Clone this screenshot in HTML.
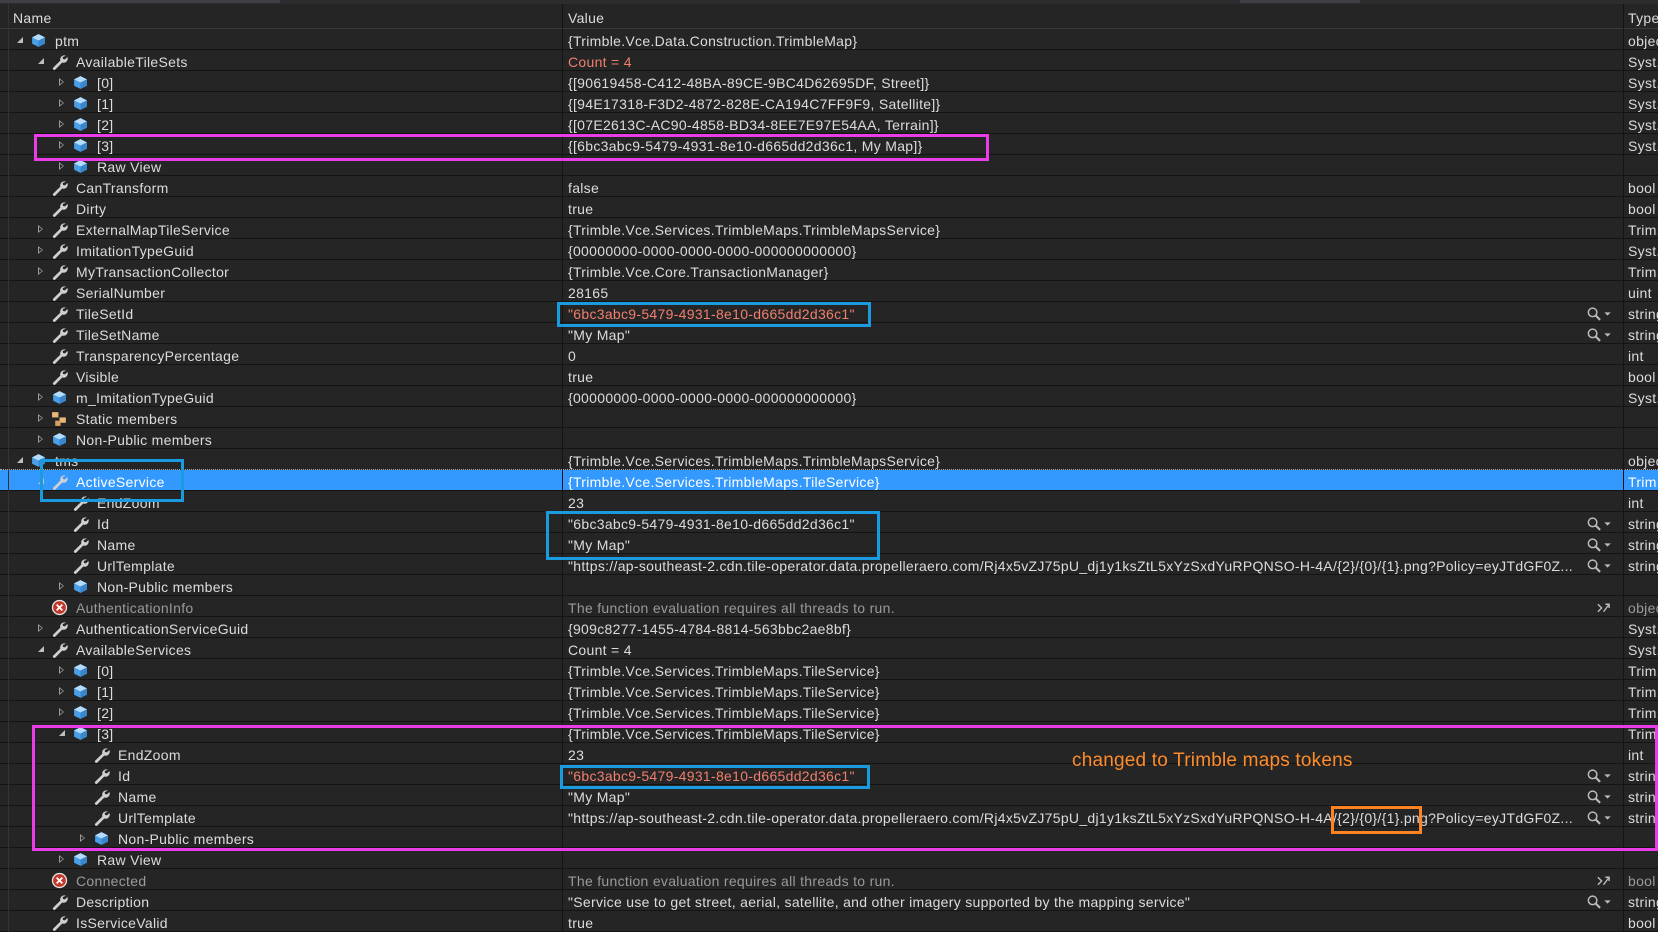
<!DOCTYPE html>
<html><head><meta charset="utf-8"><style>
*{margin:0;padding:0;box-sizing:border-box}
body{width:1658px;height:932px;background:#252526;overflow:hidden;position:relative;font-family:"Liberation Sans",sans-serif;font-size:14px;color:#dcdcdc;letter-spacing:0.3px}
.top{position:absolute;left:0;top:0;width:1658px;height:4px;background:#2d2d30}
.top i{position:absolute;top:0;height:3px;background:#3f3f46}
.hdr{position:absolute;left:0;top:4px;width:1658px;height:25px;border-bottom:1px solid #3a3a3a}
.hdr span{position:absolute;top:6px}
.r{position:absolute;left:0;width:1658px;height:21px;border-bottom:1px solid #141414;white-space:nowrap}
.r>*{position:absolute}
.n{top:4px}
.v{left:568px;top:4px;width:1020px;overflow:hidden}
.y{left:1628px;top:4px;width:30px;overflow:hidden}
.t{top:7px;width:0;height:0}
.c{border-left:5px solid #9a9a9a;border-top:4px solid transparent;border-bottom:4px solid transparent}
.c::after{content:"";position:absolute;left:-4px;top:-2px;border-left:3px solid #252526;border-top:2px solid transparent;border-bottom:2px solid transparent}
.e{border-right:6px solid #bfbfbf;border-top:6px solid transparent;top:8px}
.ic{top:3px;width:17px;height:17px}
.L0 .t{left:17px}.L0 .ic{left:30px}.L0 .n{left:55px}
.L1 .t{left:38px}.L1 .ic{left:51px}.L1 .n{left:76px}
.L2 .t{left:59px}.L2 .ic{left:72px}.L2 .n{left:97px}
.L3 .t{left:80px}.L3 .ic{left:93px}.L3 .n{left:118px}
.red{color:#f07f6e}
.g{color:#9a9a9a}
.sel{background:#3399ff;color:#fff}
.sel .v,.sel .y{color:#fff}
.mg{left:1586px;top:4px;width:26px;height:16px}
.vl{position:absolute;top:4px;width:1px;height:928px;background:#141414}
.box{position:absolute;border:3px solid}
</style></head><body>
<svg width="0" height="0" style="position:absolute">
<defs>
<symbol id="cube" viewBox="0 0 16 16"><polygon points="8,2 14,5 14,11 8,14 2,11 2,5" fill="#4a9fe6"/><polygon points="8,2 14,5 8,8 2,5" fill="#b5dcfa"/><polygon points="8,8 14,5 14,11 8,14" fill="#3a86cc"/></symbol>
<symbol id="wr" viewBox="0 0 16 16"><path d="M14 2.6a3.8 3.8 0 0 0-5.2 4.6L2.2 13.6a1.3 1.3 0 0 0 1.9 1.9l6.5-6.6a3.8 3.8 0 0 0 4.8-5.1l-2.2 2.2-1.9-.3-.3-1.9z" fill="#d0d0d0"/></symbol>
<symbol id="err" viewBox="0 0 16 16"><circle cx="8" cy="8" r="7.2" fill="#e8e8e8"/><circle cx="8" cy="8" r="6" fill="#c1392b"/><path d="M5.3 5.3l5.4 5.4M10.7 5.3l-5.4 5.4" stroke="#fff" stroke-width="1.6"/></symbol>
<symbol id="st" viewBox="0 0 16 16"><rect x="1" y="2" width="6" height="5" fill="#e8b878"/><rect x="8" y="7" width="6" height="5" fill="#e8b878"/><rect x="4" y="10" width="5" height="5" fill="#d9a060"/></symbol>
<symbol id="mag" viewBox="0 0 24 15"><circle cx="6" cy="6" r="4" fill="none" stroke="#bbb" stroke-width="1.4"/><path d="M9 9l4 4" stroke="#bbb" stroke-width="2"/><path d="M17 6h6l-3 3z" fill="#bbb"/></symbol>
<symbol id="nr" viewBox="0 0 16 16"><path d="M2 4l4 4-4 4M8 12l6-8M10 4h4v4" stroke="#bbb" stroke-width="1.5" fill="none"/></symbol>
</defs></svg>
<div class="top"><i style="left:0;width:280px"></i><i style="left:1240px;width:120px"></i></div>
<div class="hdr"><span style="left:13px">Name</span><span style="left:568px">Value</span><span style="left:1628px">Type</span></div>

<div class="r L0" style="top:29px"><i class="t e"></i><svg class="ic"><use href="#cube"/></svg><span class="n">ptm</span><span class="v">{Trimble.Vce.Data.Construction.TrimbleMap}</span><span class="y">object</span></div>
<div class="r L1" style="top:50px"><i class="t e"></i><svg class="ic"><use href="#wr"/></svg><span class="n">AvailableTileSets</span><span class="v red">Count = 4</span><span class="y">Syst...</span></div>
<div class="r L2" style="top:71px"><i class="t c"></i><svg class="ic"><use href="#cube"/></svg><span class="n">[0]</span><span class="v">{[90619458-C412-48BA-89CE-9BC4D62695DF, Street]}</span><span class="y">Syst...</span></div>
<div class="r L2" style="top:92px"><i class="t c"></i><svg class="ic"><use href="#cube"/></svg><span class="n">[1]</span><span class="v">{[94E17318-F3D2-4872-828E-CA194C7FF9F9, Satellite]}</span><span class="y">Syst...</span></div>
<div class="r L2" style="top:113px"><i class="t c"></i><svg class="ic"><use href="#cube"/></svg><span class="n">[2]</span><span class="v">{[07E2613C-AC90-4858-BD34-8EE7E97E54AA, Terrain]}</span><span class="y">Syst...</span></div>
<div class="r L2" style="top:134px"><i class="t c"></i><svg class="ic"><use href="#cube"/></svg><span class="n">[3]</span><span class="v">{[6bc3abc9-5479-4931-8e10-d665dd2d36c1, My Map]}</span><span class="y">Syst...</span></div>
<div class="r L2" style="top:155px"><i class="t c"></i><svg class="ic"><use href="#cube"/></svg><span class="n">Raw View</span></div>
<div class="r L1" style="top:176px"><svg class="ic"><use href="#wr"/></svg><span class="n">CanTransform</span><span class="v">false</span><span class="y">bool</span></div>
<div class="r L1" style="top:197px"><svg class="ic"><use href="#wr"/></svg><span class="n">Dirty</span><span class="v">true</span><span class="y">bool</span></div>
<div class="r L1" style="top:218px"><i class="t c"></i><svg class="ic"><use href="#wr"/></svg><span class="n">ExternalMapTileService</span><span class="v">{Trimble.Vce.Services.TrimbleMaps.TrimbleMapsService}</span><span class="y">Trim...</span></div>
<div class="r L1" style="top:239px"><i class="t c"></i><svg class="ic"><use href="#wr"/></svg><span class="n">ImitationTypeGuid</span><span class="v">{00000000-0000-0000-0000-000000000000}</span><span class="y">Syst...</span></div>
<div class="r L1" style="top:260px"><i class="t c"></i><svg class="ic"><use href="#wr"/></svg><span class="n">MyTransactionCollector</span><span class="v">{Trimble.Vce.Core.TransactionManager}</span><span class="y">Trim...</span></div>
<div class="r L1" style="top:281px"><svg class="ic"><use href="#wr"/></svg><span class="n">SerialNumber</span><span class="v">28165</span><span class="y">uint</span></div>
<div class="r L1" style="top:302px"><svg class="ic"><use href="#wr"/></svg><span class="n">TileSetId</span><span class="v red">"6bc3abc9-5479-4931-8e10-d665dd2d36c1"</span><svg class="mg"><use href="#mag"/></svg><span class="y">string</span></div>
<div class="r L1" style="top:323px"><svg class="ic"><use href="#wr"/></svg><span class="n">TileSetName</span><span class="v">"My Map"</span><svg class="mg"><use href="#mag"/></svg><span class="y">string</span></div>
<div class="r L1" style="top:344px"><svg class="ic"><use href="#wr"/></svg><span class="n">TransparencyPercentage</span><span class="v">0</span><span class="y">int</span></div>
<div class="r L1" style="top:365px"><svg class="ic"><use href="#wr"/></svg><span class="n">Visible</span><span class="v">true</span><span class="y">bool</span></div>
<div class="r L1" style="top:386px"><i class="t c"></i><svg class="ic"><use href="#cube"/></svg><span class="n">m_ImitationTypeGuid</span><span class="v">{00000000-0000-0000-0000-000000000000}</span><span class="y">Syst...</span></div>
<div class="r L1" style="top:407px"><i class="t c"></i><svg class="ic"><use href="#st"/></svg><span class="n">Static members</span></div>
<div class="r L1" style="top:428px"><i class="t c"></i><svg class="ic"><use href="#cube"/></svg><span class="n">Non-Public members</span></div>
<div class="r L0" style="top:449px;border-bottom:1px dotted #aaa"><i class="t e"></i><svg class="ic"><use href="#cube"/></svg><span class="n">tms</span><span class="v">{Trimble.Vce.Services.TrimbleMaps.TrimbleMapsService}</span><span class="y">object</span></div>
<div class="r L1 sel" style="top:470px"><i class="t e"></i><svg class="ic"><use href="#wr"/></svg><span class="n">ActiveService</span><span class="v">{Trimble.Vce.Services.TrimbleMaps.TileService}</span><span class="y">Trim...</span></div>
<div class="r L2" style="top:491px"><svg class="ic"><use href="#wr"/></svg><span class="n">EndZoom</span><span class="v">23</span><span class="y">int</span></div>
<div class="r L2" style="top:512px"><svg class="ic"><use href="#wr"/></svg><span class="n">Id</span><span class="v">"6bc3abc9-5479-4931-8e10-d665dd2d36c1"</span><svg class="mg"><use href="#mag"/></svg><span class="y">string</span></div>
<div class="r L2" style="top:533px"><svg class="ic"><use href="#wr"/></svg><span class="n">Name</span><span class="v">"My Map"</span><svg class="mg"><use href="#mag"/></svg><span class="y">string</span></div>
<div class="r L2" style="top:554px"><svg class="ic"><use href="#wr"/></svg><span class="n">UrlTemplate</span><span class="v" style="width:1010px">"https://ap-southeast-2.cdn.tile-operator.data.propelleraero.com/Rj4x5vZJ75pU_dj1y1ksZtL5xYzSxdYuRPQNSO-H-4A/{2}/{0}/{1}.png?Policy=eyJTdGF0Z...</span><svg class="mg"><use href="#mag"/></svg><span class="y">string</span></div>
<div class="r L2" style="top:575px"><i class="t c"></i><svg class="ic"><use href="#cube"/></svg><span class="n">Non-Public members</span></div>
<div class="r L1 g" style="top:596px"><svg class="ic"><use href="#err"/></svg><span class="n">AuthenticationInfo</span><span class="v">The function evaluation requires all threads to run.</span><svg class="mg" style="left:1596px;width:15px"><use href="#nr"/></svg><span class="y">object</span></div>
<div class="r L1" style="top:617px"><i class="t c"></i><svg class="ic"><use href="#wr"/></svg><span class="n">AuthenticationServiceGuid</span><span class="v">{909c8277-1455-4784-8814-563bbc2ae8bf}</span><span class="y">Syst...</span></div>
<div class="r L1" style="top:638px"><i class="t e"></i><svg class="ic"><use href="#wr"/></svg><span class="n">AvailableServices</span><span class="v">Count = 4</span><span class="y">Syst...</span></div>
<div class="r L2" style="top:659px"><i class="t c"></i><svg class="ic"><use href="#cube"/></svg><span class="n">[0]</span><span class="v">{Trimble.Vce.Services.TrimbleMaps.TileService}</span><span class="y">Trim...</span></div>
<div class="r L2" style="top:680px"><i class="t c"></i><svg class="ic"><use href="#cube"/></svg><span class="n">[1]</span><span class="v">{Trimble.Vce.Services.TrimbleMaps.TileService}</span><span class="y">Trim...</span></div>
<div class="r L2" style="top:701px"><i class="t c"></i><svg class="ic"><use href="#cube"/></svg><span class="n">[2]</span><span class="v">{Trimble.Vce.Services.TrimbleMaps.TileService}</span><span class="y">Trim...</span></div>
<div class="r L2" style="top:722px"><i class="t e"></i><svg class="ic"><use href="#cube"/></svg><span class="n">[3]</span><span class="v">{Trimble.Vce.Services.TrimbleMaps.TileService}</span><span class="y">Trim...</span></div>
<div class="r L3" style="top:743px"><svg class="ic"><use href="#wr"/></svg><span class="n">EndZoom</span><span class="v">23</span><span class="y">int</span></div>
<div class="r L3" style="top:764px"><svg class="ic"><use href="#wr"/></svg><span class="n">Id</span><span class="v red">"6bc3abc9-5479-4931-8e10-d665dd2d36c1"</span><svg class="mg"><use href="#mag"/></svg><span class="y">string</span></div>
<div class="r L3" style="top:785px"><svg class="ic"><use href="#wr"/></svg><span class="n">Name</span><span class="v">"My Map"</span><svg class="mg"><use href="#mag"/></svg><span class="y">string</span></div>
<div class="r L3" style="top:806px"><svg class="ic"><use href="#wr"/></svg><span class="n">UrlTemplate</span><span class="v" style="width:1010px">"https://ap-southeast-2.cdn.tile-operator.data.propelleraero.com/Rj4x5vZJ75pU_dj1y1ksZtL5xYzSxdYuRPQNSO-H-4A/{2}/{0}/{1}.png?Policy=eyJTdGF0Z...</span><svg class="mg"><use href="#mag"/></svg><span class="y">string</span></div>
<div class="r L3" style="top:827px"><i class="t c"></i><svg class="ic"><use href="#cube"/></svg><span class="n">Non-Public members</span></div>
<div class="r L2" style="top:848px"><i class="t c"></i><svg class="ic"><use href="#cube"/></svg><span class="n">Raw View</span></div>
<div class="r L1 g" style="top:869px"><svg class="ic"><use href="#err"/></svg><span class="n">Connected</span><span class="v">The function evaluation requires all threads to run.</span><svg class="mg" style="left:1596px;width:15px"><use href="#nr"/></svg><span class="y">bool</span></div>
<div class="r L1" style="top:890px"><svg class="ic"><use href="#wr"/></svg><span class="n">Description</span><span class="v">"Service use to get street, aerial, satellite, and other imagery supported by the mapping service"</span><svg class="mg"><use href="#mag"/></svg><span class="y">string</span></div>
<div class="r L1" style="top:911px"><svg class="ic"><use href="#wr"/></svg><span class="n">IsServiceValid</span><span class="v">true</span><span class="y">bool</span></div>

<div class="vl" style="left:562px"></div>
<div class="vl" style="left:1623px"></div>
<div class="vl" style="left:8px;background:#333"></div>

<div class="box" style="left:34px;top:134px;width:955px;height:27px;border-color:#e83de8"></div>
<div class="box" style="left:557px;top:302px;width:314px;height:25px;border-color:#1a9be0"></div>
<div class="box" style="left:40px;top:459px;width:144px;height:43px;border-color:#1a9be0"></div>
<div class="box" style="left:546px;top:511px;width:334px;height:49px;border-color:#1a9be0"></div>
<div class="box" style="left:32px;top:725px;width:1626px;height:126px;border-color:#e83de8"></div>
<div class="box" style="left:560px;top:765px;width:310px;height:24px;border-color:#1a9be0"></div>
<div class="box" style="left:1331px;top:806px;width:91px;height:28px;border-color:#ff8421"></div>
<div style="position:absolute;left:1072px;top:750px;font-size:19px;color:#ff8c28;letter-spacing:0.2px">changed to Trimble maps tokens</div>
</body></html>
